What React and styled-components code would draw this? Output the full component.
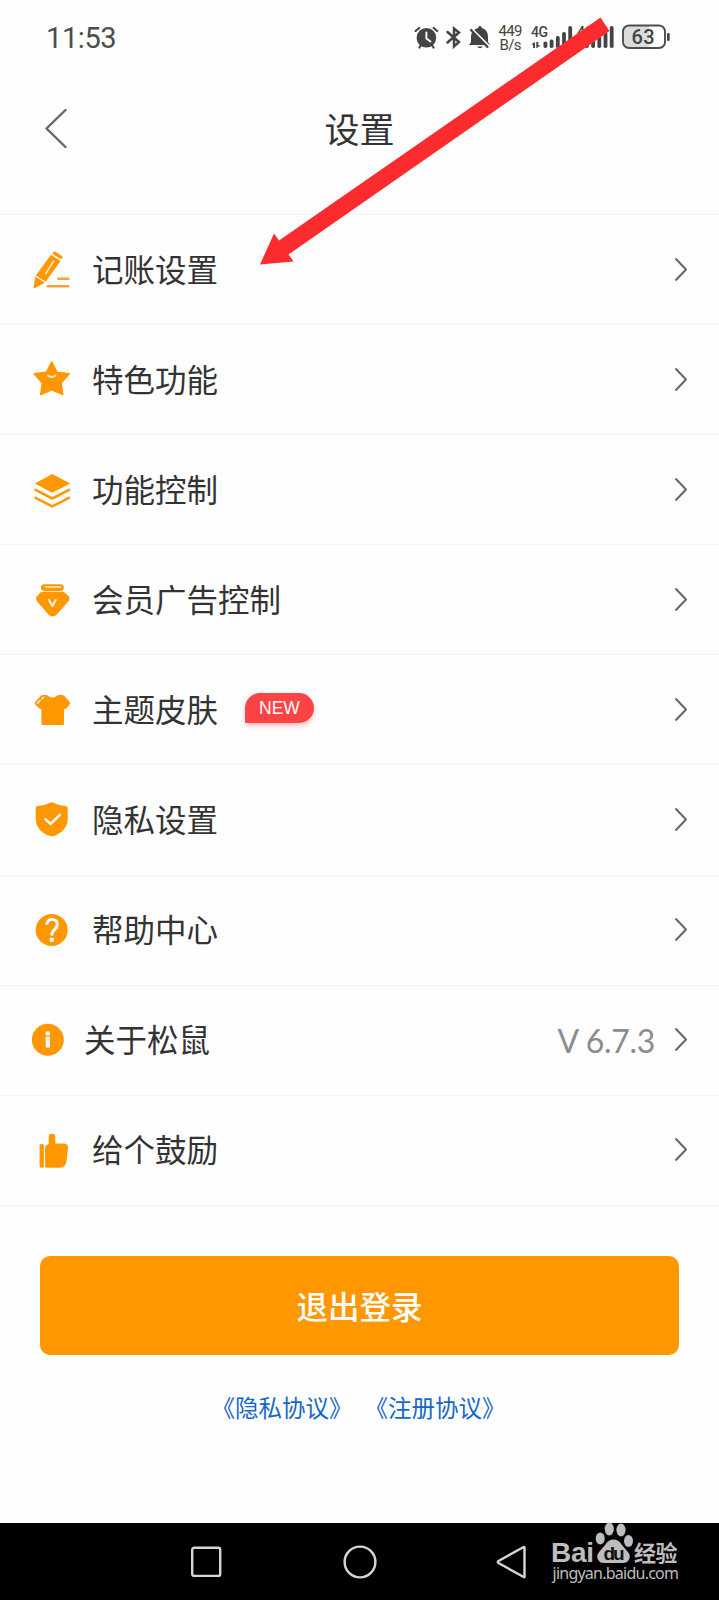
import React from "react";
import styled, { createGlobalStyle, css } from "styled-components";

const ORANGE = "#ff9800";

const items = [
  { title: "记账设置", icon: "pencil" },
  { title: "特色功能", icon: "star" },
  { title: "功能控制", icon: "layers" },
  { title: "会员广告控制", icon: "member" },
  { title: "主题皮肤", icon: "shirt", badge: "NEW" },
  { title: "隐私设置", icon: "shield" },
  { title: "帮助中心", icon: "help" },
  { title: "关于松鼠", icon: "info", value: "V 6.7.3", narrow: true },
  { title: "给个鼓励", icon: "thumb" },
];

const line = {
  fill: "none",
  stroke: "#fff",
  strokeWidth: 2.6,
  strokeLinecap: "round",
  strokeLinejoin: "round",
};

const icons = {
  pencil: (
    <>
      <path d="M21.4 2.200q.8-1.300 2.200-.5l6 4.100q1.200.8.500 2l-1 1.500-9-5.800z" />
      <path d="M19 4.700l9.500 6.200-14.800 20.900L3.800 25.400z" />
      <path d="M3.400 26.400l9.600 6.300-10.100 5.200q-1.400.6-1.300-1z" />
      <path {...line} strokeWidth="1.5" stroke="#fff3dd" d="M21.400 11.400l-7.600 12.200" />
      <path {...line} stroke="#f3a436" d="M26.400 28.800h9.800M15.800 36.200h20.400" />
    </>
  ),
  star: (
    <>
      <path
        stroke={ORANGE}
        strokeWidth="1.4"
        strokeLinejoin="round"
        d="M19.700 1.900l5.200 10.200 12.400 1.600-8.200 9.300 1.700 11.700-11.100-4.900-11.100 4.900 1.700-11.700-8.200-9.300 12.400-1.600z"
      />
      <path {...line} strokeWidth="2" stroke="#ffe9c4" d="M16 15.500q3.700 2.800 7.400 0" />
    </>
  ),
  layers: (
    <>
      <path d="M20.300 4l18 9.500-18 9.200L2.800 13.500z" />
      <path {...line} stroke={ORANGE} strokeWidth="2.600" d="M3.600 19.800l16.700 8.700L37 19.800M3.600 27.900l16.700 8.500L37 27.900" />
    </>
  ),
  member: (
    <>
      <rect x="9" y="4.200" width="22.800" height="6.800" rx="3.400" />
      <path {...line} strokeWidth="1.500" stroke="#ffe9c4" d="M13.600 7.100h14.800" />
      <path d="M11 11.800h19.300q1.700 0 2.900 1.200l3.300 3q2.200 2.400 0 5.200L24.800 34.600q-4.200 3.800-8.400 0L5 21.200q-2.200-2.800 0-5.200L8 13q1.300-1.200 3-1.200z" />
      <path {...line} strokeWidth="2.100" stroke="#fff3dd" d="M17 20l3.400 6 3.400-6" />
    </>
  ),
  shirt: (
    <>
      <path d="M11 5.100h3q1.400 0 2.200.8 4.400 3.200 8.600 0 .9-.8 2.200-.8h3q1.600 0 2.600 1.200l5 5.800q1 1.300 0 2.500l-3 3.600q-.8 1-2.600.8v14.500q0 1.600-1.600 1.600H11q-1.600 0-1.600-1.600V19q-1.400.2-2.300-.8l-3.900-3.800q-1-1.100 0-2.300l5.200-5.800Q9.400 5.100 11 5.100z" />
      <path {...line} strokeWidth="1.700" stroke="#ffe9c4" strokeLinecap="butt" strokeDasharray="5 1.400 4 0" d="M5 13.600l6.800-6.800" />
    </>
  ),
  shield: (
    <>
      <path d="M18 2.800q1.700-1 3.500 0 4.900 2.800 12 3.100 2.200.1 2.200 2.200v10.600c0 8.800-6.500 14.600-13.300 17q-2.600.9-5.400 0C10.200 33.300 3.700 27.500 3.700 18.700V8.100q0-2.100 2.200-2.200Q13.100 5.600 18 2.800z" />
      <path {...line} strokeWidth="2.500" d="M13.400 19.400l5.200 4.400 9.300-9" />
    </>
  ),
  help: (
    <>
      <circle cx="19.700" cy="20" r="16" />
      <path {...line} strokeWidth="3" strokeLinecap="butt" d="M15 14.800c0-7.400 10.300-7 10.300-.2 0 5.200-5.600 4.600-5.600 11" />
      <circle cx="19.700" cy="29.700" r="2.200" fill="#fff" />
    </>
  ),
  info: (
    <>
      <circle cx="15.800" cy="19.800" r="16" />
      <circle cx="15.800" cy="13.600" r="2.300" fill="#fff" />
      <path fill="#fff" d="M13.500 16.800h4.400v10.700h-4z" />
    </>
  ),
  thumb: (
    <>
      <rect x="7.600" y="14" width="4.300" height="23.700" rx="1.700" />
      <path d="M16.700 7q0-3.300 3.300-3.300T23.300 7v6.500h8.200q5 0 4.500 4.700L34.300 32q-.8 5.700-6.300 5.700H15q-1.900 0-1.900-1.900V17.500q0-1.600 1.300-2.300l2.300-1.200z" />
    </>
  ),
};

const SignalBars = ({ x }) => (
  <>
    {[6.500, 8.500, 12, 16, 22].map((h, i) => (
      <rect key={h} x={x + i * 6.200} y={48 - h} width="3.800" height={h} rx="1.700" />
    ))}
  </>
);

const StatusIcons = () => (
  <StatusSvg width="270" height="76" viewBox="410 0 270 76">
    <path {...line} stroke="#444" strokeWidth="2.200" d="M415.600 31l3.600-3M437.200 31l-3.600-3M419.500 47.500l2-3M433.500 47.500l-2-3" />
    <circle cx="426.400" cy="37.800" r="9.800" />
    <path {...line} strokeWidth="1.900" d="M426.400 32.500v6l4 3" />
    <path {...line} stroke="#444" strokeWidth="2.500" strokeLinejoin="miter" d="M447.500 32l11.500 10-5 4.500v-18l5 4-11.500 10" />
    <path d="M478 28q.2-2 2-2t2 2q6 2 6 9v5l2 3h-21l2-3v-5q0-7 7-9zM477 46.500h6q-3 3.500-6 0z" />
    <path {...line} strokeLinecap="butt" strokeWidth="2" d="M469.500 26.500l19.500 19.500" />
    <path {...line} stroke="#444" strokeWidth="2.300" d="M471 30l16.500 17" />
    <StatusText x="498.500" y="36" $size={15} textLength="24">449</StatusText>
    <StatusText x="499.500" y="50" $size={15} textLength="22">B/s</StatusText>
    <StatusText x="531" y="37" $size={14} $bold textLength="17">4G</StatusText>
    <path d="M535 42v6h-2v-3.500h-2zM536.300 42h2v3.500h2.500l-4.500 2.700z" />
    <SignalBars x={543.500} />
    <StatusText x="577" y="37" $size={14} $bold textLength="17">4G</StatusText>
    <SignalBars x={585} />
    <rect x="623" y="26" width="42" height="22" rx="6" fill="#fff" />
    <path fill="#dcdcdc" d="M629 26h20v22h-20q-6 0-6-6V32q0-6 6-6z" />
    <rect x="623" y="25.500" width="42" height="22.500" rx="6" fill="none" stroke="#4d4d4d" strokeWidth="1.900" />
    <rect x="667" y="33" width="2.700" height="8" rx="1.300" />
    <StatusText x="631.500" y="44" $size={20} $bold textLength="23">63</StatusText>
  </StatusSvg>
);

const Watermark = () => (
  <WatermarkSvg width="132" height="72" viewBox="549 1520 132 72">
    <g fill="#bdbdbd">
      <LogoText x="551" y="1562" $size={28} textLength="43">Bai</LogoText>
      <ellipse cx="600.200" cy="1538.500" rx="4.500" ry="6" />
      <ellipse cx="609.300" cy="1529" rx="4.600" ry="6.500" />
      <ellipse cx="621" cy="1530" rx="4.600" ry="6.500" />
      <ellipse cx="628.500" cy="1541" rx="4.500" ry="6" />
      <path d="M613.500 1539.500q5 0 8 5l6 7q3.500 4 1.500 8t-7 3.500h-17q-5 .5-7-3.500t1.500-8l6-7q3-5 8-5z" />
      <LogoText x="603.500" y="1559.500" $size={19} $dark textLength="21">du</LogoText>
      <LogoText x="634" y="1560.500" $size={22} textLength="43.500">经验</LogoText>
      <UrlText x="552.500" y="1579" textLength="126.500">jingyan.baidu.com</UrlText>
    </g>
  </WatermarkSvg>
);

const App = () => (
  <Screen>
    <GlobalStyle />
    <StatusBar>
      <Time>11:53</Time>
      <StatusIcons />
    </StatusBar>

    <Header>
      <BackButton aria-label="返回">
        <svg width="24" height="40" viewBox="0 0 24 40">
          <path {...line} stroke="#666" strokeWidth="2.400" d="M21.500 1L2.500 19.500l19 18.500" />
        </svg>
      </BackButton>
      <Title>设置</Title>
    </Header>

    <List>
      {items.map(({ title, icon, badge, value, narrow }) => (
        <Row key={title}>
          <RowIcon $narrow={narrow} viewBox={narrow ? "0 0 32 40" : "0 0 40 40"}>
            {icons[icon]}
          </RowIcon>
          <RowTitle>{title}</RowTitle>
          {badge && <Badge>{badge}</Badge>}
          {value && <Value>{value}</Value>}
          <Chevron viewBox="0 0 14 26">
            <path {...line} stroke="#666" strokeWidth="2" strokeLinecap="butt" d="M1.500 1.500l10.500 11L1.500 23.500" />
          </Chevron>
        </Row>
      ))}
    </List>

    <Logout>退出登录</Logout>
    <Agreements>
      <a>《隐私协议》</a>
      <a>《注册协议》</a>
    </Agreements>

    <NavBar>
      <NavKey viewBox="0 0 34 34">
        <rect x="2.200" y="2.700" width="28" height="28.200" rx="2" />
      </NavKey>
      <NavKey viewBox="0 0 34 34">
        <circle cx="17" cy="17" r="15.400" />
      </NavKey>
      <NavKey viewBox="0 0 34 34">
        <path d="M30.500 2.500v29.500q0 .5-.8 0L4.500 18q-1.500-1 0-2L29.700 2q.8-.4.8.5z" />
      </NavKey>
      <Watermark />
    </NavBar>

    <Pointer viewBox="0 0 719 300">
      <path d="M600.500 17.500L279 240.500 274 233.500 260 264.500 293.500 261.500 288.500 254.500 609.500 31z" />
    </Pointer>
  </Screen>
);

export default App;

const GlobalStyle = createGlobalStyle`
  * {
    box-sizing: border-box;
  }

  body {
    margin: 0;
    background: #fefefe;
  }
`;

const cjk = css`
  font-family: "Noto Sans CJK SC", sans-serif;
`;

const Screen = styled.div`
  position: relative;
  display: flex;
  flex-direction: column;
  width: 719px;
  height: 1600px;
  overflow: hidden;
  background: #fefefe;
  color: #333;
  ${cjk};
`;

const StatusBar = styled.div`
  display: flex;
  align-items: center;
  justify-content: space-between;
  height: 76px;
  padding: 0 39px 0 46px;
`;

const Time = styled.span`
  font: 29px/1 Roboto, sans-serif;
  letter-spacing: -0.4px;
  color: #4d4d4d;
`;

const StatusSvg = styled.svg`
  fill: #444;
`;

const StatusText = styled.text`
  font-family: Roboto, sans-serif;
  font-size: ${({ $size }) => $size}px;
  font-weight: ${({ $bold }) => ($bold ? 500 : 400)};
`;

const Header = styled.header`
  display: grid;
  grid-template-columns: 120px 1fr 120px;
  align-items: center;
  height: 106px;
  margin-bottom: 32px;
`;

const BackButton = styled.button`
  display: flex;
  padding: 0 0 0 44px;
  border: 0;
  background: none;
`;

const Title = styled.h1`
  margin: 0 0 3px;
  font-size: 35px;
  font-weight: 400;
  line-height: 50px;
  text-align: center;
`;

const List = styled.div`
  border-top: 1px solid #f5f5f5;
`;

const Row = styled.div`
  display: flex;
  align-items: center;
  height: 110.1px;
  padding: 0 31px 0 32px;
  border-bottom: 1px solid #f5f5f5;
`;

const RowIcon = styled.svg`
  flex: none;
  width: ${({ $narrow }) => ($narrow ? 32 : 40)}px;
  height: 40px;
  margin-right: 20px;
  fill: ${ORANGE};
`;

const RowTitle = styled.span`
  margin-bottom: 4px;
  font-size: 31.500px;
  line-height: 46px;
`;

const Badge = styled.span`
  height: 30px;
  margin: -4px 0 0 27px;
  padding: 0 14px;
  border-radius: 15px 15px 15px 1px;
  background: #fe4346;
  box-shadow: 0 3px 5px rgba(254, 67, 70, 0.3);
  color: #fff;
  font: 17.500px/31px "Liberation Sans", sans-serif;
`;

const Value = styled.span`
  margin: 2px 0 0 auto;
  padding-right: 19px;
  color: #8c8c8c;
  font: 32px/46px Lato, sans-serif;
  letter-spacing: -0.3px;

  & + svg {
    margin-left: 0;
  }
`;

const Chevron = styled.svg`
  flex: none;
  width: 14px;
  height: 26px;
  margin-left: auto;
`;

const Logout = styled.button`
  flex: none;
  height: 99px;
  margin: 50px 40px 0;
  border: 0;
  border-radius: 10px;
  background: ${ORANGE};
  color: #fff;
  font-size: 31.500px;
  font-weight: 500;
  ${cjk};
`;

const Agreements = styled.div`
  display: flex;
  justify-content: center;
  gap: 12px;
  margin: 35px 2px 0 0;
  color: #1668c8;
  font-size: 23.500px;
  line-height: 34px;
`;

const NavBar = styled.nav`
  position: relative;
  display: flex;
  align-items: center;
  gap: 118.500px;
  height: 77px;
  margin-top: auto;
  padding-left: 190px;
  background: #000;
`;

const NavKey = styled.svg`
  width: 34px;
  height: 34px;
  fill: none;
  stroke: #d6d6d6;
  stroke-width: 2.400;

  &:nth-child(3) {
    margin-left: -1.500px;
  }
`;

const WatermarkSvg = styled.svg`
  position: absolute;
  right: 38px;
  bottom: 8px;
`;

const LogoText = styled.text`
  font-family: "Liberation Sans", "Noto Sans CJK SC", sans-serif;
  font-size: ${({ $size }) => $size}px;
  font-weight: 700;
  ${({ $dark }) => $dark && "fill: #111;"}
`;

const UrlText = styled.text`
  font: 16px "Noto Sans", sans-serif;
`;

const Pointer = styled.svg`
  position: absolute;
  top: 0;
  left: 0;
  width: 719px;
  height: 300px;
  fill: #fb2b2e;
  pointer-events: none;
`;
